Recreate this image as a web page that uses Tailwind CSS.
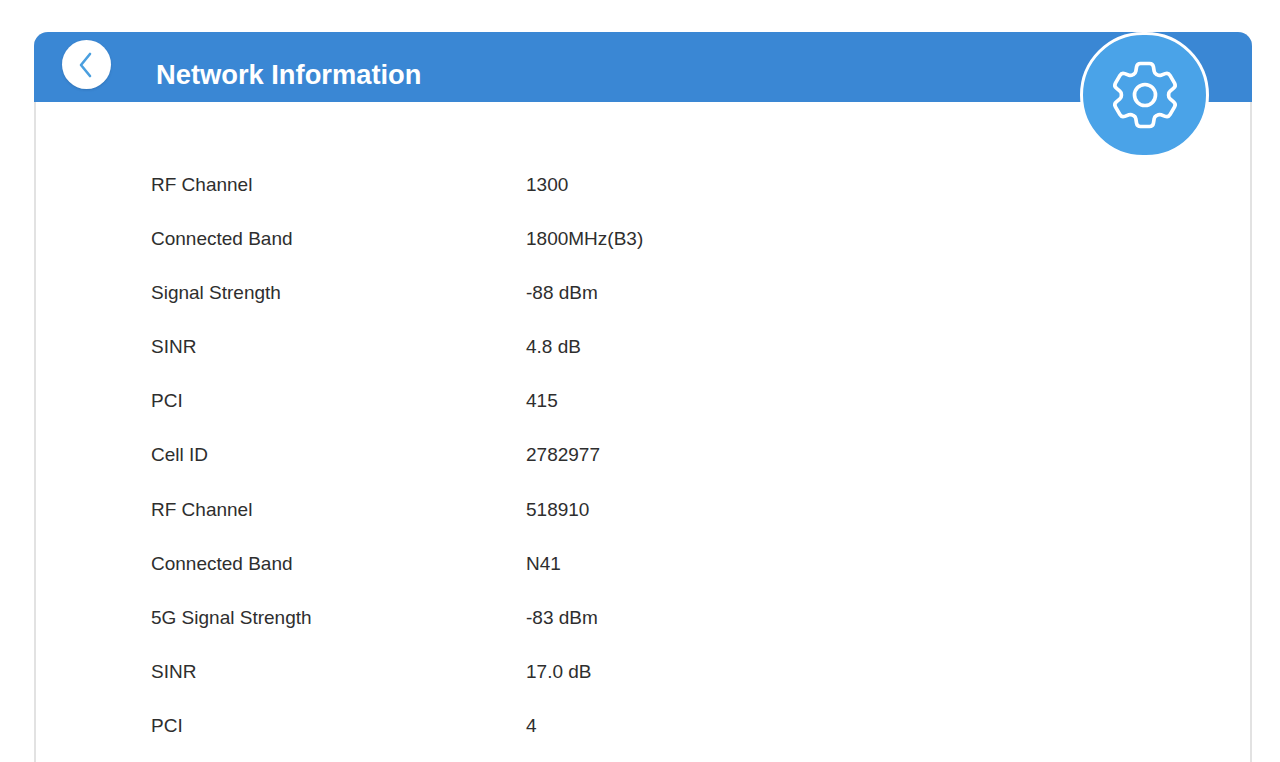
<!DOCTYPE html>
<html lang="en">
<head>
  <meta charset="UTF-8">
  <title>Network Information</title>
  <script src="https://cdn.jsdelivr.net/npm/@tailwindcss/browser@4"></script>
</head>
<body class="bg-white text-[#2e2e2e] font-['Liberation_Sans',Arial,sans-serif] h-[762px] overflow-hidden">
  <div class="pt-8 pl-[34px] pr-[28px]">
    <div class="relative rounded-t-[14px] border-x-2 border-[#e2e2e2] h-[730px]">
      <!-- Header -->
      <header class="relative -mx-[2px] h-[70px] bg-[#3a87d4] rounded-t-[14px] pl-[122px]">
        <h1 class="pt-[26px] text-[27.3px] leading-[34px] font-bold text-white">Network Information</h1>
        <button class="absolute left-[28px] top-[8px] w-[49px] h-[49px] rounded-full bg-white flex items-center justify-center shadow-sm">
          <svg class="w-[18px] h-[28px] mr-[2px]" viewBox="0 0 18 28" fill="none" stroke="#4a9fdf" stroke-width="2.6" stroke-linecap="round" stroke-linejoin="round">
            <path d="M13 3 4 14l9 11" />
          </svg>
        </button>
      </header>

      <!-- Settings badge -->
      <div class="absolute left-[1044px] top-0 w-[129px] h-[126px] rounded-full bg-[#4aa3e8] border-[3px] border-white flex items-center justify-center">
        <svg class="w-[84px] h-[84px]" viewBox="0 0 24 24" fill="none" stroke="white" stroke-width="1.05" stroke-linecap="round" stroke-linejoin="round">
          <path d="M9.594 3.94c.09-.542.56-.94 1.11-.94h2.593c.55 0 1.02.398 1.11.94l.213 1.281c.063.374.313.686.645.87.074.04.147.083.22.127.325.196.72.257 1.075.124l1.217-.456a1.125 1.125 0 0 1 1.37.49l1.296 2.247a1.125 1.125 0 0 1-.26 1.431l-1.003.827c-.293.241-.438.613-.43.992a7.723 7.723 0 0 1 0 .255c-.008.378.137.75.43.991l1.004.827c.424.35.534.955.26 1.43l-1.298 2.247a1.125 1.125 0 0 1-1.369.491l-1.217-.456c-.355-.133-.75-.072-1.076.124a6.47 6.47 0 0 1-.22.128c-.331.183-.581.495-.644.869l-.213 1.281c-.09.543-.56.94-1.11.94h-2.594c-.55 0-1.019-.398-1.11-.94l-.213-1.281c-.062-.374-.312-.686-.644-.87a6.52 6.52 0 0 1-.22-.127c-.325-.196-.72-.257-1.076-.124l-1.217.456a1.125 1.125 0 0 1-1.369-.49l-1.297-2.247a1.125 1.125 0 0 1 .26-1.431l1.004-.827c.292-.24.437-.613.43-.991a6.932 6.932 0 0 1 0-.255c.007-.38-.138-.751-.43-.992l-1.004-.827a1.125 1.125 0 0 1-.26-1.43l1.297-2.247a1.125 1.125 0 0 1 1.37-.491l1.216.456c.356.133.751.072 1.076-.124.072-.044.146-.086.22-.128.332-.183.582-.495.644-.869l.214-1.28Z" />
          <circle cx="12" cy="12" r="3" />
        </svg>
      </div>

      <!-- Rows -->
      <dl class="pt-[56px] pl-[115px] text-[19px] leading-[54.1px]">
        <div class="flex"><dt class="w-[375px]">RF Channel</dt><dd>1300</dd></div>
        <div class="flex"><dt class="w-[375px]">Connected Band</dt><dd>1800MHz(B3)</dd></div>
        <div class="flex"><dt class="w-[375px]">Signal Strength</dt><dd>-88 dBm</dd></div>
        <div class="flex"><dt class="w-[375px]">SINR</dt><dd>4.8 dB</dd></div>
        <div class="flex"><dt class="w-[375px]">PCI</dt><dd>415</dd></div>
        <div class="flex"><dt class="w-[375px]">Cell ID</dt><dd>2782977</dd></div>
        <div class="flex"><dt class="w-[375px]">RF Channel</dt><dd>518910</dd></div>
        <div class="flex"><dt class="w-[375px]">Connected Band</dt><dd>N41</dd></div>
        <div class="flex"><dt class="w-[375px]">5G Signal Strength</dt><dd>-83 dBm</dd></div>
        <div class="flex"><dt class="w-[375px]">SINR</dt><dd>17.0 dB</dd></div>
        <div class="flex"><dt class="w-[375px]">PCI</dt><dd>4</dd></div>
      </dl>
    </div>
  </div>
</body>
</html>
